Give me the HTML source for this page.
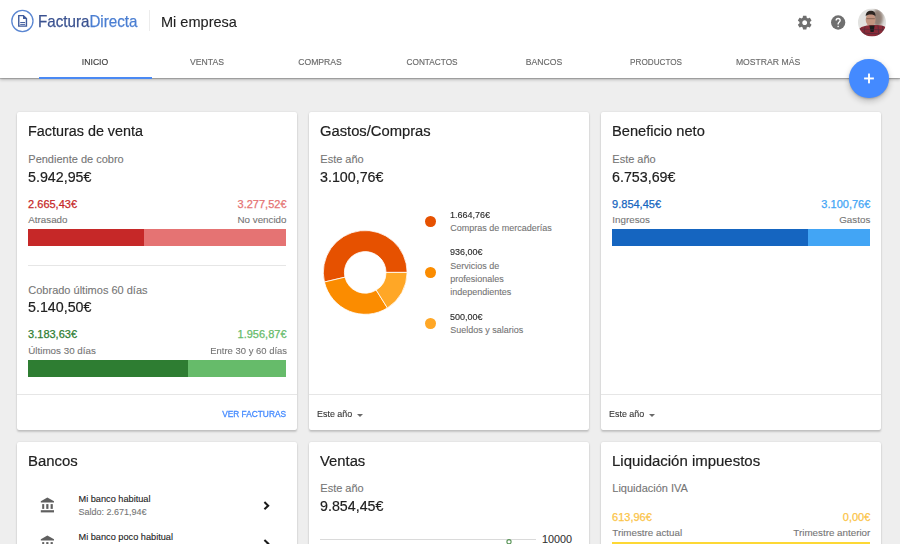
<!DOCTYPE html>
<html><head><meta charset="utf-8"><style>
html,body{margin:0;padding:0;width:900px;height:544px;overflow:hidden;background:#eeeeee;font-family:"Liberation Sans", sans-serif;}
.t{position:absolute;white-space:nowrap;line-height:1;-webkit-text-stroke:0.1px currentColor;}
#hdr{position:absolute;left:0;top:0;width:900px;height:78.2px;background:#fff;box-shadow:0 1px 1px rgba(0,0,0,.2),0 2px 3px rgba(0,0,0,.2);}
.card{position:absolute;width:280px;background:#fff;border-radius:2px;box-shadow:0 2px 2px rgba(0,0,0,.17),0 0 2px rgba(0,0,0,.12);}
.m{-webkit-text-stroke:0.25px currentColor;}
.ms{-webkit-text-stroke:0.12px currentColor;}
</style></head><body>
<div id="hdr"></div>
<svg style="position:absolute;left:0;top:0" width="150" height="40">
<circle cx="22.4" cy="21.0" r="10.6" fill="none" stroke="#5a86d2" stroke-width="1.3"/>
<path d="M18.75 15.6 H23.4 L26.45 18.65 V26.1 H18.75 Z" fill="none" stroke="#3f5b9c" stroke-width="1.4" stroke-linejoin="miter"/>
<path d="M23.0 15.0 L27.1 19.1 H23.0 Z" fill="#3f5b9c"/>
<rect x="20.2" y="22.0" width="4.9" height="0.95" fill="#3f5b9c"/>
<rect x="20.2" y="23.9" width="4.9" height="0.95" fill="#3f5b9c"/>
</svg>
<div class="t" style="left:38.10px;top:13.42px;font-size:16.4px;color:#212121;transform:scaleX(0.925);transform-origin:0 0;-webkit-text-stroke:0.25px currentColor;"><span style="color:#3a5290">Factura</span><span style="color:#4a7ed2">Directa</span></div>
<div style="position:absolute;left:149px;top:10px;width:1px;height:21px;background:#ececec;"></div>
<div class="t" style="left:160.80px;top:14.91px;font-size:14.4px;color:#212121;transform:scaleX(1.01);transform-origin:0 0;">Mi empresa</div>
<svg style="position:absolute;left:0;top:0" width="900" height="544"><g transform="translate(796.35 14.3) scale(0.69583 0.69583) translate(0 0)"><path fill="#6f6f6f" d="M19.43 12.98c.04-.32.07-.64.07-.98s-.03-.66-.07-.98l2.11-1.65c.19-.15.24-.42.12-.64l-2-3.46c-.12-.22-.39-.3-.61-.22l-2.49 1c-.52-.4-1.08-.73-1.69-.98l-.38-2.65C14.46 2.18 14.25 2 14 2h-4c-.25 0-.46.18-.49.42l-.38 2.650c-.61.25-1.17.59-1.69.98l-2.49-1c-.23-.09-.49 0-.61.22l-2 3.46c-.13.22-.07.49.12.64l2.11 1.65c-.04.32-.07.65-.07.98s.03.66.07.98l-2.11 1.65c-.19.15-.24.42-.12.64l2 3.46c.12.22.39.3.61.22l2.490-1c.52.4 1.08.73 1.69.98l.38 2.65c.03.24.24.42.49.42h4c.25 0 .46-.18.49-.42l.38-2.65c.61-.25 1.17-.59 1.69-.98l2.49 1c.23.09.49 0 .61-.22l2-3.46c.12-.22.07-.49-.12-.64l-2.11-1.65zM12 15.5c-1.93 0-3.5-1.57-3.5-3.5s1.57-3.5 3.5-3.5 3.5 1.57 3.5 3.5-1.57 3.5-3.5 3.5z"/></g></svg>
<svg style="position:absolute;left:0;top:0" width="900" height="544"><g transform="translate(831 15.35) scale(0.71500 0.71500) translate(-2 -2)"><circle cx="12" cy="12" r="10" fill="#6f6f6f"/><path fill="none" stroke="#fff" stroke-width="1.9" d="M9.2 9.3c0-1.7 1.2-2.9 2.8-2.9s2.8 1.1 2.8 2.7c0 2-2.8 2.3-2.8 4.8v0.9"/><rect x="11.05" y="16.6" width="1.9" height="1.9" fill="#fff"/></g></svg>
<svg style="position:absolute;left:0;top:0" width="900" height="544"><g transform="translate(858 8.5) scale(1.00000 1.00000) translate(0 0)">
<defs><clipPath id="av"><circle cx="14" cy="14" r="14"/></clipPath><filter id="bl" x="-50%" y="-50%" width="200%" height="200%"><feGaussianBlur stdDeviation="1.6"/></filter><filter id="bl2"><feGaussianBlur stdDeviation="0.5"/></filter></defs>
<g clip-path="url(#av)">
<rect width="28" height="28" fill="#e2e2e0"/>
<ellipse cx="19.5" cy="9.5" rx="5.5" ry="9" fill="#7d685c" opacity=".8" filter="url(#bl)"/>
<g filter="url(#bl2)">
<ellipse cx="12.6" cy="11.2" rx="4.9" ry="6.6" fill="#c39480"/><path d="M8.5 10.2 H16.8" stroke="#5a4238" stroke-width="0.8" opacity=".7"/>
<path d="M7.7 7.8 C7.8 3.8 10 2.3 12.8 2.3 C15.8 2.3 17.6 3.8 17.5 7.8 C16 5.6 9.6 5.4 7.7 7.8Z" fill="#2d2522"/>
<path d="M0 28 L1.5 20 C4 17.8 8 17.2 11.5 16.8 L17 16.6 C21 16.2 25 16.8 28 19 L28 28Z" fill="#8a2c37"/>
<path d="M11.4 17 L16.6 17 L15.6 23.5 L12.6 23.5Z" fill="#1c1c1c"/>
<path d="M2 20.5 L27 21.5 M1 24.5 L27 25.5 M7 18 L5.5 28 M20 17 L21 28 M24.5 17.5 L25.5 28" stroke="#3e2a3c" stroke-width="0.9" opacity=".6"/>
</g></g></g></svg>
<div class="t" style="left:39.30px;width:112.1px;text-align:center;top:56.77px;font-size:9.6px;color:#3c3c3c;transform:scaleX(0.9);-webkit-text-stroke:0.15px currentColor">INICIO</div>
<div class="t" style="left:151.40px;width:112.1px;text-align:center;top:56.77px;font-size:9.6px;color:#6a6a6a;transform:scaleX(0.9);-webkit-text-stroke:0.15px currentColor">VENTAS</div>
<div class="t" style="left:263.50px;width:112.1px;text-align:center;top:56.77px;font-size:9.6px;color:#6a6a6a;transform:scaleX(0.9);-webkit-text-stroke:0.15px currentColor">COMPRAS</div>
<div class="t" style="left:375.60px;width:112.1px;text-align:center;top:56.77px;font-size:9.6px;color:#6a6a6a;transform:scaleX(0.86);-webkit-text-stroke:0.15px currentColor">CONTACTOS</div>
<div class="t" style="left:487.70px;width:112.1px;text-align:center;top:56.77px;font-size:9.6px;color:#6a6a6a;transform:scaleX(0.9);-webkit-text-stroke:0.15px currentColor">BANCOS</div>
<div class="t" style="left:599.80px;width:112.1px;text-align:center;top:56.77px;font-size:9.6px;color:#6a6a6a;transform:scaleX(0.85);-webkit-text-stroke:0.15px currentColor">PRODUCTOS</div>
<div class="t" style="left:711.90px;width:112.1px;text-align:center;top:56.77px;font-size:9.6px;color:#6a6a6a;transform:scaleX(0.9);-webkit-text-stroke:0.15px currentColor">MOSTRAR MÁS</div>
<div style="position:absolute;left:39.4px;top:76.8px;width:112.4px;height:2.2px;background:#4a89f3;"></div>
<div class="card" style="left:17px;top:112px;height:318px"></div>
<div class="card" style="left:309px;top:112px;height:318px"></div>
<div class="card" style="left:601px;top:112px;height:318px"></div>
<div class="card" style="left:17px;top:442px;height:200px"></div>
<div class="card" style="left:309px;top:442px;height:200px"></div>
<div class="card" style="left:601px;top:442px;height:200px"></div>
<div class="t" style="left:28.30px;top:123.38px;font-size:15.5px;color:#212121;-webkit-text-stroke:0.2px currentColor;transform:scaleX(0.927);transform-origin:0 0;">Facturas de venta</div>
<div class="t" style="left:28.30px;top:153.59px;font-size:11px;color:#757575;">Pendiente de cobro</div>
<div class="t" style="left:28.30px;top:168.98px;font-size:15.5px;color:#212121;-webkit-text-stroke:0.2px currentColor;transform:scaleX(0.92);transform-origin:0 0;">5.942,95€</div>
<div class="t m" style="left:28.10px;top:198.69px;font-size:11px;color:#c62828;">2.665,43€</div>
<div class="t m" style="left:-113.50px;width:400px;text-align:right;top:198.69px;font-size:11px;color:#e57373;">3.277,52€</div>
<div class="t" style="left:28.30px;top:215.20px;font-size:9.8px;color:#757575;">Atrasado</div>
<div class="t" style="left:-113.50px;width:400px;text-align:right;top:215.20px;font-size:9.8px;color:#757575;">No vencido</div>
<div style="position:absolute;left:28px;top:229px;width:115.8px;height:16.7px;background:#c62828;"></div>
<div style="position:absolute;left:143.8px;top:229px;width:142.2px;height:16.7px;background:#e57373;"></div>
<div style="position:absolute;left:28px;top:265px;width:258px;height:1px;background:#e6e6e6;"></div>
<div class="t" style="left:28.30px;top:284.99px;font-size:11px;color:#757575;">Cobrado últimos 60 días</div>
<div class="t" style="left:28.30px;top:299.38px;font-size:15.5px;color:#212121;-webkit-text-stroke:0.2px currentColor;transform:scaleX(0.92);transform-origin:0 0;">5.140,50€</div>
<div class="t m" style="left:28.10px;top:329.39px;font-size:11px;color:#2e7d32;">3.183,63€</div>
<div class="t m" style="left:-113.50px;width:400px;text-align:right;top:329.39px;font-size:11px;color:#66bb6a;">1.956,87€</div>
<div class="t" style="left:28.30px;top:345.90px;font-size:9.8px;color:#757575;">Últimos 30 días</div>
<div class="t" style="left:-113.50px;width:400px;text-align:right;top:345.90px;font-size:9.8px;color:#757575;transform:scaleX(0.965);transform-origin:100% 0;">Entre 30 y 60 días</div>
<div style="position:absolute;left:28px;top:360px;width:160px;height:17px;background:#2e7d32;"></div>
<div style="position:absolute;left:188px;top:360px;width:98px;height:17px;background:#66bb6a;"></div>
<div style="position:absolute;left:17px;top:394px;width:280px;height:1px;background:#e6e6e6;"></div>
<div class="t ms" style="left:-113.70px;width:400px;text-align:right;top:409.73px;font-size:9.3px;color:#448aff;-webkit-text-stroke:0.3px currentColor;transform:scaleX(0.895);transform-origin:100% 0;">VER FACTURAS</div>
<div class="t" style="left:320.30px;top:123.38px;font-size:15.5px;color:#212121;-webkit-text-stroke:0.2px currentColor;transform:scaleX(0.952);transform-origin:0 0;">Gastos/Compras</div>
<div class="t" style="left:320.30px;top:153.59px;font-size:11px;color:#757575;">Este año</div>
<div class="t" style="left:320.30px;top:168.98px;font-size:15.5px;color:#212121;-webkit-text-stroke:0.2px currentColor;transform:scaleX(0.92);transform-origin:0 0;">3.100,76€</div>
<svg style="position:absolute;left:0;top:0" width="900" height="544"><path d="M407.10 272.40 A41.9 41.9 0 1 0 324.42 282.02 L344.96 277.18 A20.8 20.8 0 1 1 386.00 272.40 Z" fill="#e65100" stroke="#fff" stroke-width="0.8"/><path d="M324.42 282.02 A41.9 41.9 0 0 0 387.37 307.95 L376.21 290.05 A20.8 20.8 0 0 1 344.96 277.18 Z" fill="#fb8c00" stroke="#fff" stroke-width="0.8"/><path d="M387.37 307.95 A41.9 41.9 0 0 0 407.10 272.40 L386.00 272.40 A20.8 20.8 0 0 1 376.21 290.05 Z" fill="#ffa726" stroke="#fff" stroke-width="0.8"/></svg>
<div style="position:absolute;left:425px;top:215.90px;width:10.8px;height:10.8px;border-radius:50%;background:#e65100"></div>
<div class="t ms" style="left:450.30px;top:209.50px;font-size:9.8px;color:#2a2a2a;transform:scaleX(0.92);transform-origin:0 0;">1.664,76€</div>
<div class="t" style="left:450.30px;top:223.63px;font-size:9px;color:#757575;">Compras de mercaderías</div>
<div style="position:absolute;left:425px;top:267.10px;width:10.8px;height:10.8px;border-radius:50%;background:#fb8c00"></div>
<div class="t ms" style="left:450.30px;top:247.40px;font-size:9.8px;color:#2a2a2a;transform:scaleX(0.92);transform-origin:0 0;">936,00€</div>
<div class="t" style="left:450.30px;top:261.53px;font-size:9px;color:#757575;">Servicios de</div>
<div class="t" style="left:450.30px;top:274.68px;font-size:9px;color:#757575;">profesionales</div>
<div class="t" style="left:450.30px;top:287.83px;font-size:9px;color:#757575;">independientes</div>
<div style="position:absolute;left:425px;top:318.00px;width:10.8px;height:10.8px;border-radius:50%;background:#ffa726"></div>
<div class="t ms" style="left:450.30px;top:311.80px;font-size:9.8px;color:#2a2a2a;transform:scaleX(0.92);transform-origin:0 0;">500,00€</div>
<div class="t" style="left:450.30px;top:325.93px;font-size:9px;color:#757575;">Sueldos y salarios</div>
<div style="position:absolute;left:309px;top:394px;width:280px;height:1px;background:#e6e6e6;"></div>
<div class="t" style="left:317.30px;top:408.60px;font-size:9.8px;color:#333333;transform:scaleX(0.91);transform-origin:0 0;">Este año</div>
<div style="position:absolute;left:357.30px;top:414.3px;width:0;height:0;border-left:3.6px solid transparent;border-right:3.6px solid transparent;border-top:3.7px solid #6a6a6a"></div>
<div class="t" style="left:612.30px;top:123.38px;font-size:15.5px;color:#212121;-webkit-text-stroke:0.2px currentColor;transform:scaleX(0.945);transform-origin:0 0;">Beneficio neto</div>
<div class="t" style="left:612.30px;top:153.59px;font-size:11px;color:#757575;">Este año</div>
<div class="t" style="left:612.30px;top:168.98px;font-size:15.5px;color:#212121;-webkit-text-stroke:0.2px currentColor;transform:scaleX(0.92);transform-origin:0 0;">6.753,69€</div>
<div class="t m" style="left:612.10px;top:198.69px;font-size:11px;color:#1565c0;">9.854,45€</div>
<div class="t m" style="left:470.30px;width:400px;text-align:right;top:198.69px;font-size:11px;color:#42a5f5;">3.100,76€</div>
<div class="t" style="left:612.30px;top:215.20px;font-size:9.8px;color:#757575;">Ingresos</div>
<div class="t" style="left:470.30px;width:400px;text-align:right;top:215.20px;font-size:9.8px;color:#757575;">Gastos</div>
<div style="position:absolute;left:612px;top:229px;width:196px;height:16.7px;background:#1565c0;"></div>
<div style="position:absolute;left:808px;top:229px;width:62px;height:16.7px;background:#42a5f5;"></div>
<div style="position:absolute;left:601px;top:394px;width:280px;height:1px;background:#e6e6e6;"></div>
<div class="t" style="left:609.30px;top:408.60px;font-size:9.8px;color:#333333;transform:scaleX(0.91);transform-origin:0 0;">Este año</div>
<div style="position:absolute;left:649.30px;top:414.3px;width:0;height:0;border-left:3.6px solid transparent;border-right:3.6px solid transparent;border-top:3.7px solid #6a6a6a"></div>
<div class="t" style="left:28.30px;top:452.68px;font-size:15.5px;color:#212121;-webkit-text-stroke:0.2px currentColor;transform:scaleX(0.962);transform-origin:0 0;">Bancos</div>
<svg style="position:absolute;left:35px;top:490px" width="25" height="30" viewBox="35 490 25 30">
<path d="M40.8 502.4 V501.3 L47.4 497.6 L54 501.3 V502.4 Z" fill="#606060"/>
<rect x="42.2" y="504.1" width="2" height="4.8" fill="#606060"/><rect x="46.25" y="504.1" width="2.2" height="4.8" fill="#606060"/><rect x="50.6" y="504.1" width="2.2" height="4.8" fill="#606060"/>
<rect x="40.8" y="510.2" width="13.2" height="2.2" fill="#606060"/></svg>
<div class="t" style="left:78.50px;top:494.61px;font-size:9.2px;color:#212121;">Mi banco habitual</div>
<div class="t" style="left:78.50px;top:508.18px;font-size:9px;color:#757575;">Saldo: 2.671,94€</div>
<svg style="position:absolute;left:0;top:0" width="900" height="544"><g transform="translate(262.9 500.7) scale(1.00000 1.00000) translate(0 0)"><path d="M1.5 1.4 L5.3 5 L1.5 8.6" fill="none" stroke="#1a1a1a" stroke-width="2"/></g></svg>
<svg style="position:absolute;left:35px;top:528px" width="25" height="30" viewBox="35 490 25 30">
<path d="M40.8 502.4 V501.3 L47.4 497.6 L54 501.3 V502.4 Z" fill="#606060"/>
<rect x="42.2" y="504.1" width="2" height="4.8" fill="#606060"/><rect x="46.25" y="504.1" width="2.2" height="4.8" fill="#606060"/><rect x="50.6" y="504.1" width="2.2" height="4.8" fill="#606060"/>
<rect x="40.8" y="510.2" width="13.2" height="2.2" fill="#606060"/></svg>
<div class="t" style="left:78.50px;top:532.91px;font-size:9.2px;color:#212121;">Mi banco poco habitual</div>
<svg style="position:absolute;left:0;top:0" width="900" height="544"><g transform="translate(262.9 538.6) scale(1.00000 1.00000) translate(0 0)"><path d="M1.5 1.4 L5.3 5 L1.5 8.6" fill="none" stroke="#1a1a1a" stroke-width="2"/></g></svg>
<div class="t" style="left:320.30px;top:452.68px;font-size:15.5px;color:#212121;-webkit-text-stroke:0.2px currentColor;transform:scaleX(0.955);transform-origin:0 0;">Ventas</div>
<div class="t" style="left:320.30px;top:483.39px;font-size:11px;color:#757575;">Este año</div>
<div class="t" style="left:320.30px;top:498.38px;font-size:15.5px;color:#212121;-webkit-text-stroke:0.2px currentColor;transform:scaleX(0.92);transform-origin:0 0;">9.854,45€</div>
<div style="position:absolute;left:320px;top:539px;width:216px;height:1px;background:#dadada;"></div>
<svg style="position:absolute;left:504px;top:535px" width="10" height="10"><circle cx="5" cy="6.7" r="2.1" fill="#fff" stroke="#5a9558" stroke-width="1.1"/></svg>
<div class="t" style="left:541.90px;top:534.46px;font-size:10.8px;color:#333333;">10000</div>
<div class="t" style="left:612.30px;top:452.68px;font-size:15.5px;color:#212121;-webkit-text-stroke:0.2px currentColor;transform:scaleX(0.966);transform-origin:0 0;">Liquidación impuestos</div>
<div class="t" style="left:612.30px;top:483.39px;font-size:11px;color:#757575;">Liquidación IVA</div>
<div class="t m" style="left:612.10px;top:512.09px;font-size:11px;color:#fbc447;">613,96€</div>
<div class="t m" style="left:470.30px;width:400px;text-align:right;top:512.09px;font-size:11px;color:#fbc447;">0,00€</div>
<div class="t" style="left:612.30px;top:527.70px;font-size:9.8px;color:#757575;">Trimestre actual</div>
<div class="t" style="left:470.30px;width:400px;text-align:right;top:527.70px;font-size:9.8px;color:#757575;">Trimestre anterior</div>
<div style="position:absolute;left:612px;top:542px;width:258px;height:10px;background:#fdd835;"></div>
<div style="position:absolute;left:849.3px;top:58.8px;width:39.4px;height:39.4px;border-radius:50%;background:#448aff;box-shadow:0 3px 6px rgba(0,0,0,.22),0 1px 2px rgba(0,0,0,.18)"></div>

<svg style="position:absolute;left:0;top:0" width="900" height="544"><g transform="translate(849 58) scale(1.00000 1.00000) translate(0 0)"><rect x="15.1" y="19.5" width="9.8" height="1.9" fill="#fff"/><rect x="19.05" y="15.55" width="1.9" height="9.8" fill="#fff"/></g></svg>
</body></html>
